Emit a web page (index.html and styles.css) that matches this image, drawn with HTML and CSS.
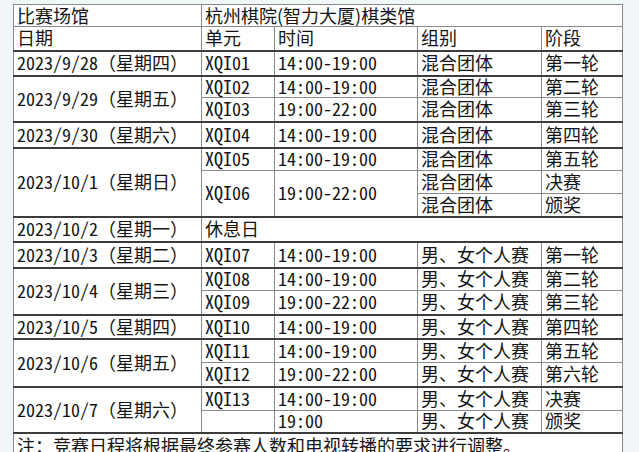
FILE: index.html
```html
<!DOCTYPE html>
<html lang="zh">
<head>
<meta charset="utf-8">
<title>比赛日程</title>
<link rel="stylesheet" href="styles.css">
</head>
<body>
<table class="sched">
  <colgroup>
    <col class="c1"><col class="c2"><col class="c3"><col class="c4"><col class="c5">
  </colgroup>
  <tr class="h22"><td>比赛场馆</td><td colspan="4">杭州棋院(智力大厦)棋类馆</td></tr>
  <tr class="h24"><td>日期</td><td>单元</td><td>时间</td><td>组别</td><td>阶段</td></tr>
  <tr class="h25 sep"><td><span class="hw">2023/9/28</span>（星期四）</td><td class="hw">XQI01</td><td class="hw">14:00-19:00</td><td>混合团体</td><td>第一轮</td></tr>
  <tr class="h22 sep"><td rowspan="2"><span class="hw">2023/9/29</span>（星期五）</td><td class="hw">XQI02</td><td class="hw">14:00-19:00</td><td>混合团体</td><td>第二轮</td></tr>
  <tr class="h24"><td class="hw">XQI03</td><td class="hw">19:00-22:00</td><td>混合团体</td><td>第三轮</td></tr>
  <tr class="h26 sep"><td><span class="hw">2023/9/30</span>（星期六）</td><td class="hw">XQI04</td><td class="hw">14:00-19:00</td><td>混合团体</td><td>第四轮</td></tr>
  <tr class="h23 sep"><td rowspan="3"><span class="hw">2023/10/1</span>（星期日）</td><td class="hw">XQI05</td><td class="hw">14:00-19:00</td><td>混合团体</td><td>第五轮</td></tr>
  <tr class="h23"><td rowspan="2" class="hw">XQI06</td><td rowspan="2" class="hw">19:00-22:00</td><td>混合团体</td><td>决赛</td></tr>
  <tr class="h23"><td>混合团体</td><td>颁奖</td></tr>
  <tr class="h25 sep"><td><span class="hw">2023/10/2</span>（星期一）</td><td colspan="4">休息日</td></tr>
  <tr class="h26 sep"><td><span class="hw">2023/10/3</span>（星期二）</td><td class="hw">XQI07</td><td class="hw">14:00-19:00</td><td>男、女个人赛</td><td>第一轮</td></tr>
  <tr class="h23 sep"><td rowspan="2"><span class="hw">2023/10/4</span>（星期三）</td><td class="hw">XQI08</td><td class="hw">14:00-19:00</td><td>男、女个人赛</td><td>第二轮</td></tr>
  <tr class="h24"><td class="hw">XQI09</td><td class="hw">19:00-22:00</td><td>男、女个人赛</td><td>第三轮</td></tr>
  <tr class="h24 sep"><td><span class="hw">2023/10/5</span>（星期四）</td><td class="hw">XQI10</td><td class="hw">14:00-19:00</td><td>男、女个人赛</td><td>第四轮</td></tr>
  <tr class="h24 sep"><td rowspan="2"><span class="hw">2023/10/6</span>（星期五）</td><td class="hw">XQI11</td><td class="hw">14:00-19:00</td><td>男、女个人赛</td><td>第五轮</td></tr>
  <tr class="h24"><td class="hw">XQI12</td><td class="hw">19:00-22:00</td><td>男、女个人赛</td><td>第六轮</td></tr>
  <tr class="h24 sep"><td rowspan="2"><span class="hw">2023/10/7</span>（星期六）</td><td class="hw">XQI13</td><td class="hw">14:00-19:00</td><td>男、女个人赛</td><td>决赛</td></tr>
  <tr class="h22"><td></td><td class="hw">19:00</td><td>男、女个人赛</td><td>颁奖</td></tr>
  <tr class="h26 sep"><td colspan="5" class="note">注：竞赛日程将根据最终参赛人数和电视转播的要求进行调整。</td></tr>
</table>
</body>
</html>
```

FILE: styles.css
```css
html, body {
  margin: 0;
  padding: 0;
  background: #f1f6f9;
}
body {
  padding: 4px 0 0 13px;
  font-family: "Noto Sans CJK SC", "Noto Sans", sans-serif;
}
.sched {
  border-collapse: collapse;
  table-layout: fixed;
  width: 609px;
  background: #ffffff;
  color: #141414;
  font-size: 18px;
  line-height: 1.1;
}
.hw {
  font-feature-settings: "hwid";
}
.c1 { width: 188px; }
.c2 { width: 73px; }
.c3 { width: 143px; }
.c4 { width: 124px; }
.c5 { width: 81px; }
.sched td {
  border: 1px solid #8a8a8a;
  padding: 0 0 0 3px;
  vertical-align: middle;
  white-space: nowrap;
}
.sched tr.sep td {
  border-top: 2px solid #3c3c3c;
}
.h22 { height: 22px; }
.h23 { height: 23px; }
.h24 { height: 24px; }
.h25 { height: 25px; }
.h26 { height: 26px; }
.note {
  vertical-align: top;
  padding-top: 2px;
}
```
